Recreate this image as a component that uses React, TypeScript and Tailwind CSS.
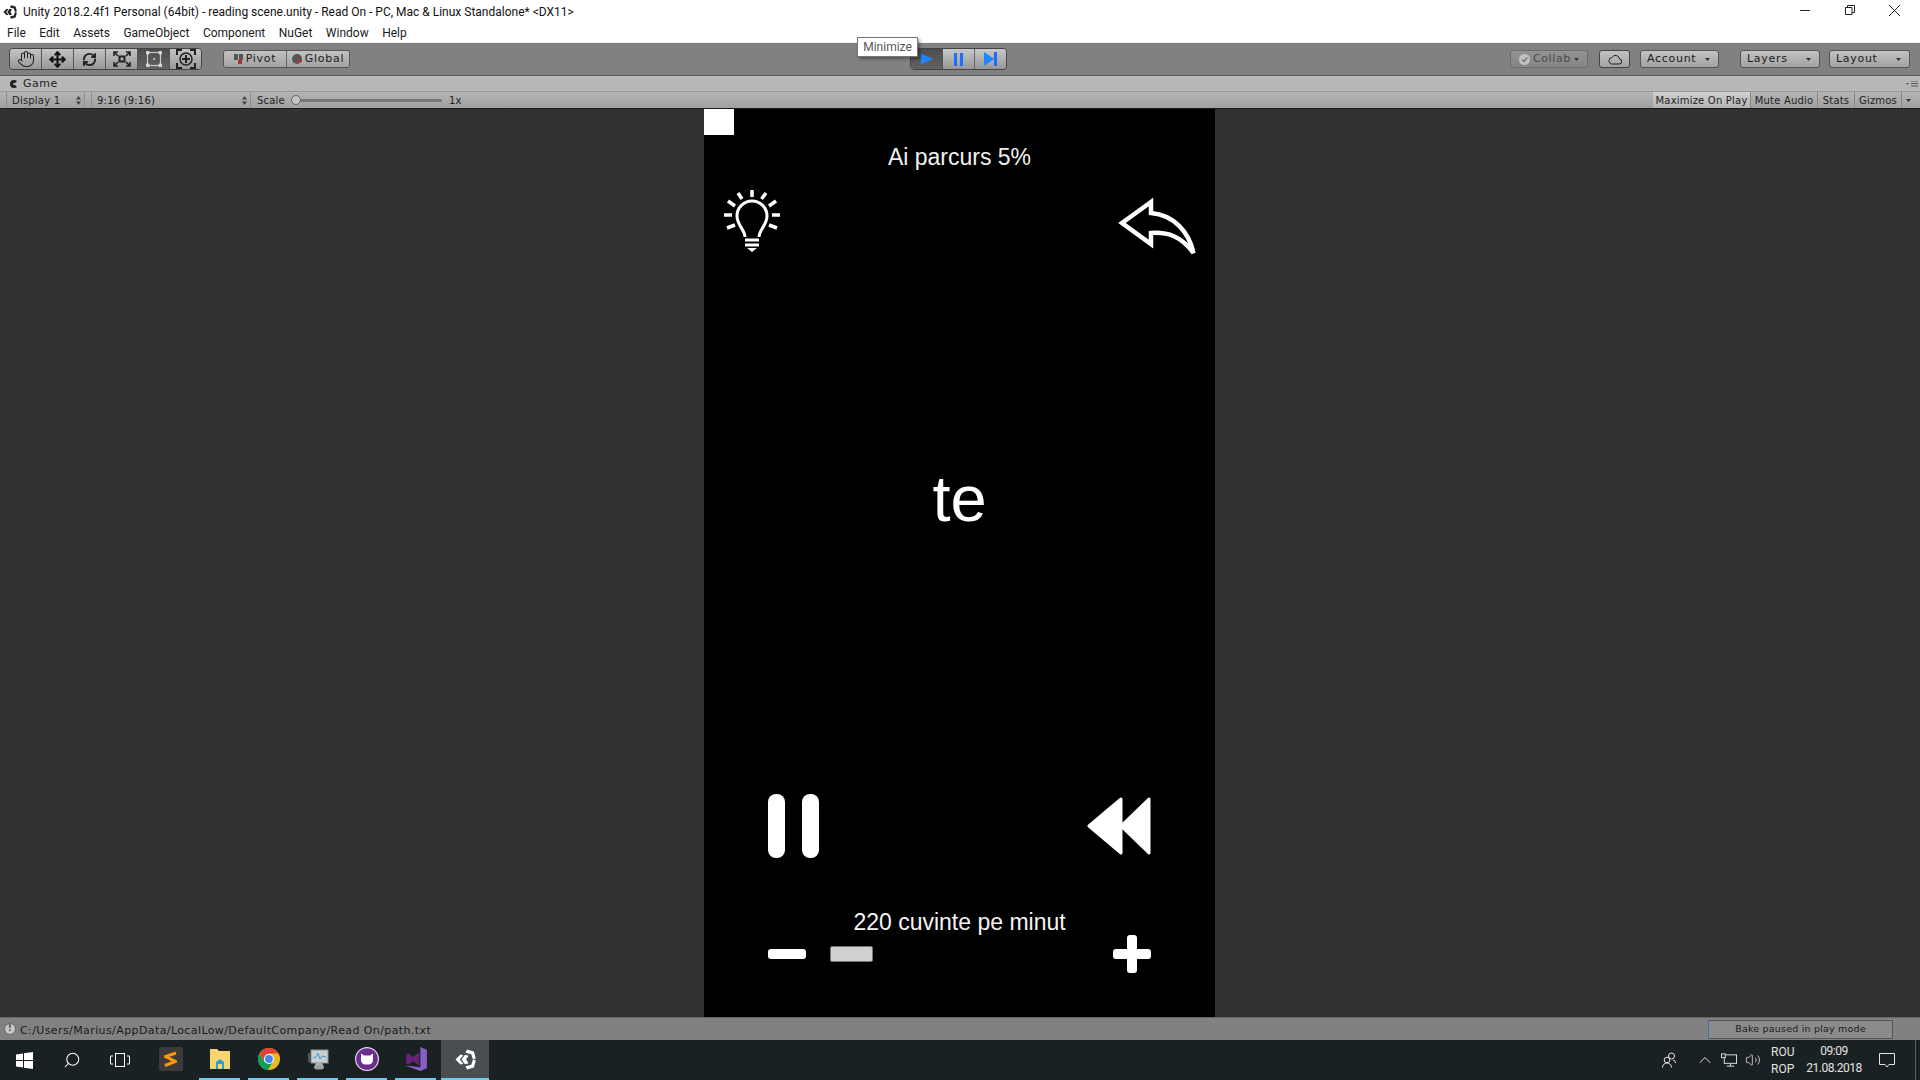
import { Hand, Move, RefreshCw, ChevronUp, Volume2, Search } from "lucide-react";

const ui = "font-['DejaVu_Sans',sans-serif]";

const Caret = () => (
  <svg width="5" height="3" viewBox="0 0 5 3" className="shrink-0">
    <path d="M0 0h5L2.5 3z" fill="#333" />
  </svg>
);

const UpDown = () => (
  <svg width="5" height="9" viewBox="0 0 5 9" className="shrink-0">
    <path d="M0 3.500L2.500 0 5 3.500zM0 5.500L2.500 9 5 5.500z" fill="#444" />
  </svg>
);

const UnityLogo = ({ size, color }: { size: number; color: string }) => (
  <svg width={size} height={size} viewBox="0 0 20 20" fill={color}>
    <path d="M11.500 .5L18 2.300l1.800 6.700-2.700 1L15.500 5 10 3.500z" />
    <path d="M.5 10L5.200 5.300 8 6 4.500 10 8 14l-2.800.7z" />
    <path d="M11.500 19.500L18 17.700l1.800-6.700-2.700-1-1.600 5-5.500 1.500z" />
    <path d="M9.500 5.500l3.500.9L10.500 10l2.500 3.600-3.500.9L6.200 10z" />
  </svg>
);

const ToolBtn = ({ children, active, last }: { children: React.ReactNode; active?: boolean; last?: boolean }) => (
  <div
    className={`h-full flex items-center justify-center ${last ? "w-[31px]" : "w-[32px] border-r border-[#555]"} ${
      active ? "bg-gradient-to-b from-[#4c4c4c] to-[#636363]" : "bg-gradient-to-b from-[#c4c4c4] to-[#989898]"
    }`}
  >
    {children}
  </div>
);

const MenuBtn = ({ label, w }: { label: string; w: string }) => (
  <div
    className={`${w} h-[18px] flex items-center justify-between pl-[6px] pr-[8px] rounded-[3px] border border-[#555] bg-gradient-to-b from-[#c2c2c2] to-[#a2a2a2] text-[11px] text-[#1c1c1c] tracking-[0.7px]`}
  >
    {label}
    <Caret />
  </div>
);

function Toolbar() {
  return (
    <div className={`${ui} relative h-[33px] bg-[#818181] border-b border-[#5a5a5a] flex items-center pl-[9px] pr-[10px] shrink-0`}>
      <div className="flex h-[22px] rounded-[4px] border border-[#444] overflow-hidden">
        <ToolBtn>
          <Hand size={18} color="#222" strokeWidth={1.4} />
        </ToolBtn>
        <ToolBtn>
          <Move size={17} color="#111" strokeWidth={3} />
        </ToolBtn>
        <ToolBtn>
          <RefreshCw size={15} color="#222" strokeWidth={3} />
        </ToolBtn>
        <ToolBtn>
          <svg width="18" height="16" viewBox="0 0 18 16" fill="none" stroke="#222" strokeWidth="1.600">
            <rect x="6.500" y="5.500" width="5" height="5" strokeWidth="2" />
            <path d="M1 5V1h4M13 1h4v4M17 11v4h-4M5 15H1v-4M1 1l4 4M17 1l-4 4M17 15l-4-4M1 15l4-4" />
          </svg>
        </ToolBtn>
        <ToolBtn active>
          <svg width="18" height="18" viewBox="0 0 18 18" fill="none">
            <rect x="2.500" y="2.500" width="13" height="13" stroke="#c8c8c8" strokeWidth="1.200" />
            <rect x="1" y="1" width="3.500" height="3.500" rx="1" fill="#d8d8d8" />
            <rect x="13.500" y="1" width="3.500" height="3.500" rx="1" fill="#d8d8d8" />
            <rect x="1" y="13.500" width="3.500" height="3.500" rx="1" fill="#d8d8d8" />
            <rect x="13.500" y="13.500" width="3.500" height="3.500" rx="1" fill="#d8d8d8" />
            <rect x="8" y="8" width="2" height="2" fill="#bbb" />
          </svg>
        </ToolBtn>
        <ToolBtn last>
          <svg width="20" height="20" viewBox="0 0 20 20" fill="none" stroke="#222" strokeWidth="1.500">
            <circle cx="10" cy="10" r="6" />
            <path d="M10 6v8M6 10h8M1 6V1h5M14 1h5v5M19 14v5h-5M6 19H1v-5" strokeWidth="2" />
          </svg>
        </ToolBtn>
      </div>

      <div className="flex h-[18px] ml-[21px] rounded-[3px] border border-[#555] overflow-hidden text-[11px] text-[#1c1c1c] tracking-[0.7px]">
        <div className="w-[63px] flex items-center justify-center gap-[3px] border-r border-[#666] bg-gradient-to-b from-[#c2c2c2] to-[#a2a2a2]">
          <svg width="9" height="10" viewBox="0 0 9 10">
            <rect x="0" y="0" width="4" height="6" fill="#555" />
            <rect x="5" y="0" width="4" height="6" fill="#555" />
            <rect x="4" y="6" width="4" height="4" fill="#a33" />
          </svg>
          Pivot
        </div>
        <div className="w-[62px] flex items-center justify-center gap-[3px] bg-gradient-to-b from-[#c2c2c2] to-[#a2a2a2]">
          <svg width="10" height="10" viewBox="0 0 10 10">
            <circle cx="5" cy="5" r="5" fill="#555" />
            <rect x="4" y="6" width="6" height="2" fill="#a33" />
          </svg>
          Global
        </div>
      </div>

      {/* play controls */}
      <div className="flex h-[22px] ml-[560px] rounded-[4px] border border-[#444] overflow-hidden">
        <div className="w-[32px] flex items-center justify-center border-r border-[#555] bg-gradient-to-b from-[#4c4c4c] to-[#636363]">
          <svg width="14" height="14" viewBox="0 0 14 14">
            <path d="M1 1.500L13 7 1 12.500z" fill="#1a86ff" />
          </svg>
        </div>
        <div className="w-[32px] flex items-center justify-center gap-[3px] border-r border-[#666] bg-gradient-to-b from-[#c8c8c8] to-[#989898]">
          <span className="w-[3px] h-[13px] bg-[#1a6eff]" />
          <span className="w-[3px] h-[13px] bg-[#1a6eff]" />
        </div>
        <div className="w-[31px] flex items-center justify-center bg-gradient-to-b from-[#c8c8c8] to-[#989898]">
          <svg width="14" height="14" viewBox="0 0 14 14">
            <path d="M0 0L10 7 0 14z" fill="#1a86ff" />
            <rect x="10" y="0" width="3" height="14" fill="#1a6eff" />
          </svg>
        </div>
      </div>

      <div className="flex-1" />

      <div className="w-[78px] h-[18px] flex items-center gap-[3px] pl-[8px] rounded-[3px] border border-[#6c6c6c] bg-gradient-to-b from-[#929292] to-[#868686] text-[11px] text-[#4a4a4a] tracking-[0.6px]">
        <svg width="11" height="11" viewBox="0 0 11 11" className="shrink-0">
          <circle cx="5.500" cy="5.500" r="5.500" fill="#c0c0c0" />
          <path d="M3 5.500l2 2 3.200-4" fill="none" stroke="#777" strokeWidth="1.500" />
        </svg>
        Collab
        <Caret />
      </div>
      <div className="w-[31px] h-[18px] ml-[11px] flex items-center justify-center rounded-[3px] border border-[#444] bg-gradient-to-b from-[#c2c2c2] to-[#a2a2a2]">
        <svg width="14" height="11" viewBox="0 0 14 11" fill="none" stroke="#222">
          <path d="M3.500 10H11a2.500 2.500 0 0 0 .5-5A4 4 0 0 0 4 3.500 3.300 3.300 0 0 0 3.500 10z" />
        </svg>
      </div>
      <div className="flex ml-[10px] gap-[21px]">
        <MenuBtn label="Account" w="w-[79px]" />
        <div className="flex gap-[9px]">
          <MenuBtn label="Layers" w="w-[80px]" />
          <MenuBtn label="Layout" w="w-[81px]" />
        </div>
      </div>

      <div className="absolute left-[857px] top-[-6px] w-[61px] h-[20px] bg-white border border-[#767676] shadow-[2px_2px_3px_rgba(0,0,0,0.35)] flex items-center justify-center font-['Roboto',sans-serif] text-[12px] text-[#575757]">
        Minimize
      </div>
    </div>
  );
}

function GameHeader() {
  return (
    <div className={`${ui} shrink-0 text-[#222]`}>
      <div className="h-[16px] bg-[#b8b8b8] border-b border-[#9a9a9a] flex items-center pl-[10px] pr-[2px] pt-[1px] text-[11px] tracking-[0.5px]">
        <span className="w-[8px] h-[8px] rounded-full border-[3px] border-[#222] border-r-transparent mr-[5px]" />
        Game
        <div className="flex-1" />
        <svg width="12" height="6" viewBox="0 0 12 6">
          <path d="M0 2h3L1.500 4z" fill="#555" />
          <path d="M5 0h7M5 2.500h7M5 5h7" stroke="#555" />
        </svg>
      </div>
      <div className="h-[17px] bg-gradient-to-b from-[#b4b4b4] to-[#a0a0a0] flex items-center text-[10px] tracking-[0.2px] border-b border-[#1a1a1a]">
        <div className="w-[79px] ml-[6px] pl-[5px] pr-[3px] pt-[1px] h-full flex items-center justify-between border-x border-[#8e8e8e]">
          Display 1
          <UpDown />
        </div>
        <div className="w-[160px] ml-[6px] pl-[5px] pr-[3px] pt-[1px] h-full flex items-center justify-between border-x border-[#8e8e8e]">
          9:16 (9:16)
          <UpDown />
        </div>
        <div className="ml-[6px] pt-[1px] flex items-center">
          Scale
          <div className="relative w-[151px] h-[3px] ml-[6px] bg-[#777] rounded-full">
            <span className="absolute left-0 top-[-4px] w-[10px] h-[10px] rounded-full bg-[#c4c4c4] border border-[#666]" />
          </div>
          <span className="ml-[7px]">1x</span>
        </div>
        <div className="flex-1" />
        <div className="h-full pt-[1px] flex items-center justify-center w-[98px] bg-gradient-to-b from-[#d0d0d0] to-[#b4b4b4] border-r border-[#888] whitespace-nowrap">Maximize On Play</div>
        <div className="h-full pt-[1px] flex items-center justify-center w-[67px] border-r border-[#888] whitespace-nowrap">Mute Audio</div>
        <div className="h-full pt-[1px] flex items-center justify-center w-[37px] border-r border-[#888]">Stats</div>
        <div className="h-full pt-[1px] flex items-center justify-center w-[47px] border-r border-[#888]">Gizmos</div>
        <div className="w-[13px] mr-[5px] flex justify-center"><Caret /></div>
      </div>
    </div>
  );
}

function GameCanvas() {
  return (
    <div className="w-[511px] h-full bg-black text-white font-['Liberation_Sans',sans-serif] flex flex-col">
      <div className="w-[30px] h-[26px] bg-white shrink-0" />
      <p className="mt-[7px] h-[30px] leading-[30px] text-center text-[23px] text-[#f0f0f0]">Ai parcurs 5%</p>

      <div className="mt-[18px] h-[65px] flex justify-between items-start pl-[20px] pr-[19px]">
        <svg width="56" height="62" viewBox="0 0 56 62" fill="none" stroke="#fff" strokeWidth="3">
          <path d="M21 47c0-7-8-12-8-21a15 15 0 0 1 30 0c0 9-8 14-8 21" />
          <path d="M21 50h14M21 55h14" />
          <path d="M23 58h10l-5 4z" fill="#fff" stroke="none" />
          <path
            d="M28 0v7M14 3l4 6M42 3l-4.500 6M4 11l7 5M52 11l-7 5M0 25h8M48 25h8M3 38l8-3M53 38l-8-3"
            strokeWidth="3.500"
          />
        </svg>
        <svg width="78" height="58" viewBox="0 0 78 58" fill="none" stroke="#fff" strokeWidth="4.500" strokeLinejoin="miter" strokeLinecap="round" className="mt-[8px]">
          <path d="M33 4L4 25l29 21V35C50 34 63 38 75.500 55 71 34 56 17 33 15z" />
        </svg>
      </div>

      <p className="mt-[209px] h-[70px] leading-[70px] text-center text-[65px]">te</p>

      <div className="flex-1" />

      <div className="flex justify-between items-center px-[64px] h-[64px]">
        <div className="flex gap-[17px]">
          <span className="w-[17px] h-[64px] rounded-[8px] bg-white" />
          <span className="w-[17px] h-[64px] rounded-[8px] bg-white" />
        </div>
        <svg width="64" height="58" viewBox="0 0 64 58" fill="#fff" stroke="#fff" strokeWidth="3" strokeLinejoin="round">
          <path d="M34 2L2 29l32 27z" />
          <path d="M62 2L34 29l28 27z" />
        </svg>
      </div>

      <p className="mt-[50px] h-[28px] leading-[28px] text-center text-[23px] text-[#f4f4f4]">220 cuvinte pe minut</p>

      <div className="flex items-center px-[64px] h-[38px] mt-[-1px] mb-[44px]">
        <span className="w-[38px] h-[10px] rounded-[3px] bg-white" />
        <span className="w-[43px] h-[16px] ml-[24px] rounded-[2px] bg-[#d0d0d0] border border-[#777]" />
        <div className="flex-1" />
        <div className="relative w-[38px] h-[38px]">
          <span className="absolute left-0 top-[14px] w-[38px] h-[10px] rounded-[3px] bg-white" />
          <span className="absolute left-[14px] top-0 w-[10px] h-[38px] rounded-[3px] bg-white" />
        </div>
      </div>
    </div>
  );
}

const TaskIcon = ({ children, running = true }: { children: React.ReactNode; running?: boolean }) => (
  <div className="w-[49px] h-full flex flex-col items-center">
    <div className="flex-1 flex items-center justify-center">{children}</div>
    <span className={`w-[41px] h-[2px] ${running ? "bg-[#76c9ea]" : ""}`} />
  </div>
);

function Taskbar() {
  return (
    <div className="h-[40px] bg-[#1a2123] flex items-center text-[#e4e4e4] shrink-0 font-['Roboto',sans-serif]">
      <div className="w-[48px] flex justify-center">
        <svg width="17" height="17" viewBox="0 0 17 17" fill="#fff">
          <path d="M0 2.500l7-1V8H0zM8 1.300L17 0v8H8zM0 9h7v6.500l-7-1zM8 9h9v8l-9-1.300z" />
        </svg>
      </div>
      <div className="w-[48px] flex justify-center">
        <Search size={18} color="#fff" strokeWidth={1.4} className="-scale-x-100" />
      </div>
      <div className="w-[48px] flex justify-center">
        <svg width="20" height="14" viewBox="0 0 20 14" fill="none" stroke="#fff">
          <rect x="5.500" y=".5" width="9" height="13" />
          <path d="M3 3H.5v8H3M17 3h2.500v8H17" />
        </svg>
      </div>
      <div className="w-[2px]" />
      <TaskIcon running={false}>
        <div className="w-[24px] h-[24px] bg-[#3a3a3a] rounded-[2px] flex items-center justify-center">
          <svg width="13" height="17" viewBox="0 0 13 17" fill="none" stroke="#ff9800" strokeWidth="3">
            <path d="M12 2L1.500 5.500l10 5L1 14.500" />
          </svg>
        </div>
      </TaskIcon>
      <TaskIcon>
        <svg width="22" height="20" viewBox="0 0 22 20">
          <path d="M1 0h7l2 2h11v18H1z" fill="#f5d76e" />
          <path d="M7 20v-7l4-3 4 3v7z" fill="#2a9fd6" />
          <rect x="9" y="15" width="4" height="5" fill="#f5d76e" />
        </svg>
      </TaskIcon>
      <TaskIcon>
        <svg width="22" height="22" viewBox="0 0 20 20">
          <circle cx="10" cy="10" r="10" fill="#e8b923" />
          <path d="M10 0a10 10 0 0 0-8.700 5L5.500 12 10 5h8.700A10 10 0 0 0 10 0z" fill="#db4437" />
          <path d="M1.300 5A10 10 0 0 0 9 20l4.300-7H6z" fill="#0f9d58" />
          <circle cx="10" cy="10" r="4.600" fill="#fff" />
          <circle cx="10" cy="10" r="3.600" fill="#4285f4" />
        </svg>
      </TaskIcon>
      <TaskIcon>
        <svg width="22" height="22" viewBox="0 0 22 22">
          <rect x="4" y="2" width="17" height="13" fill="#c8d0d4" stroke="#8a9296" />
          <path d="M6 10l3-1 2-4 2 6 2-3 4 1" fill="none" stroke="#3a9ad6" />
          <path d="M9 15h6l2 4H7z" fill="#aab2b6" />
          <ellipse cx="12" cy="19.500" rx="5" ry="2" fill="#9aa2a6" />
          <rect x="1" y="5" width="3" height="9" fill="#555" />
        </svg>
      </TaskIcon>
      <TaskIcon>
        <svg width="24" height="24" viewBox="0 0 20 20">
          <circle cx="10" cy="10" r="9.500" fill="#6a2d91" stroke="#e0d8e6" />
          <path d="M5 5.500l2.500 1.500h5L15 5.500V11a3.500 3.500 0 0 1-3.500 3.500h-3A3.500 3.500 0 0 1 5 11z" fill="#fff" />
        </svg>
      </TaskIcon>
      <TaskIcon>
        <svg width="24" height="24" viewBox="0 0 20 22">
          <path d="M14 0l6 2.500v17L14 22 0 17l14 1.500V3.500z" fill="#865fc5" />
          <path d="M1 7l2-1 4 3 6-4v12l-6-4-4 3-2-1z" fill="#68217a" />
        </svg>
      </TaskIcon>
      <div className="w-[48px] h-full bg-[#4a4e50] flex items-center justify-center border-b-2 border-[#76c9ea] ml-[1px]">
        <UnityLogo size={21} color="#fff" />
      </div>
      <div className="flex-1" />
      <svg width="14" height="16" viewBox="0 0 14 16" fill="none" stroke="#e4e4e4" className="mr-[23px]">
        <circle cx="9.500" cy="4" r="3" />
        <circle cx="5" cy="8" r="2.800" />
        <path d="M.5 15.500c0-6 9-6 9 0M11 8c2 .5 2.500 1.500 2.500 3" />
      </svg>
      <ChevronUp size={20} color="#e4e4e4" strokeWidth={1.2} className="mx-[-4px]" />
      <svg width="16" height="15" viewBox="0 0 17 15" fill="none" stroke="#e4e4e4" className="ml-[10px] mr-[8px]">
        <rect x="3.500" y="1.500" width="13" height="9" />
        <rect x=".5" y=".5" width="4" height="4" fill="#1a2123" />
        <path d="M10 10.500v3M6 13.500h8" />
      </svg>
      <Volume2 size={16} color="#e4e4e4" strokeWidth={1.2} className="mr-[10px]" />
      <div className="w-[24px] text-[12px] leading-[17px] mt-[2px]">
        <p>ROU</p>
        <p>ROP</p>
      </div>
      <div className="w-[54px] ml-[12px] flex flex-col items-center text-[12px] leading-[17px] tracking-[-0.5px] whitespace-nowrap">
        <p>09:09</p>
        <p>21.08.2018</p>
      </div>
      <svg width="16" height="16" viewBox="0 0 16 16" fill="none" stroke="#e4e4e4" className="ml-[18px] mr-[20px]">
        <path d="M.5 1.500h15v11h-5.500L8 15l-2-2.500H.5z" />
      </svg>
      <div className="w-px h-full bg-[#5a5f61] mr-[4px]" />
    </div>
  );
}

export default function App() {
  return (
    <div className="w-[1920px] h-[1080px] overflow-hidden flex flex-col bg-[#323232]">
      {/* window title + menu */}
      <div className="h-[43px] bg-white border-b border-[#f0f0f0] shrink-0 font-['Roboto',sans-serif] text-[12px] text-[#111]">
        <div className="h-[24px] flex items-center pl-[3px] pr-[3px]">
          <UnityLogo size={14} color="#222" />
          <span className="ml-[6px] whitespace-nowrap">Unity 2018.2.4f1 Personal (64bit) - reading scene.unity - Read On - PC, Mac &amp; Linux Standalone* &lt;DX11&gt;</span>
          <div className="flex-1" />
          <div className="w-[45px] flex justify-center -mt-[4px]">
            <span className="w-[10px] h-px bg-[#222]" />
          </div>
          <div className="w-[45px] flex justify-center -mt-[4px]">
            <svg width="10" height="10" viewBox="0 0 10 10" fill="none" stroke="#222">
              <path d="M.5 2.500h6.500V9.500H.5zM2.500 2.500V.5h7v7H7" />
            </svg>
          </div>
          <div className="w-[45px] flex justify-center -mt-[4px]">
            <svg width="11" height="11" viewBox="0 0 10 10" stroke="#222" strokeWidth=".9">
              <path d="M0 0l10 10M10 0L0 10" />
            </svg>
          </div>
        </div>
        <div className="h-[18px] flex items-center gap-[13.500px] pl-[7px] text-[#1a1a1a]">
          {["File", "Edit", "Assets", "GameObject", "Component", "NuGet", "Window", "Help"].map((m) => (
            <span key={m}>{m}</span>
          ))}
        </div>
      </div>

      <Toolbar />
      <GameHeader />

      <div className="flex-1 min-h-0 pl-[704px]">
        <GameCanvas />
      </div>

      <div className={`${ui} h-[23px] shrink-0 bg-[#818181] border-t border-[#666] flex items-center pl-[4px] text-[11px] text-[#1a1a1a] tracking-[0.4px]`}>
        <span className="w-[12px] h-[12px] rounded-full bg-[#c8c8c8] border border-[#666] mr-[4px] flex items-center justify-center text-[8px] leading-none font-bold text-[#444]">!</span>
        <span className="mt-[4px]">C:/Users/Marius/AppData/LocalLow/DefaultCompany/Read On/path.txt</span>
        <div className="flex-1" />
        <div className="w-[185px] h-[19px] mr-[27px] bg-[#8b8b8b] border border-[#555] border-l-[#3a70c0] flex items-center justify-center text-[9.500px] tracking-[0.2px]">
          Bake paused in play mode
        </div>
      </div>

      <Taskbar />
    </div>
  );
}
